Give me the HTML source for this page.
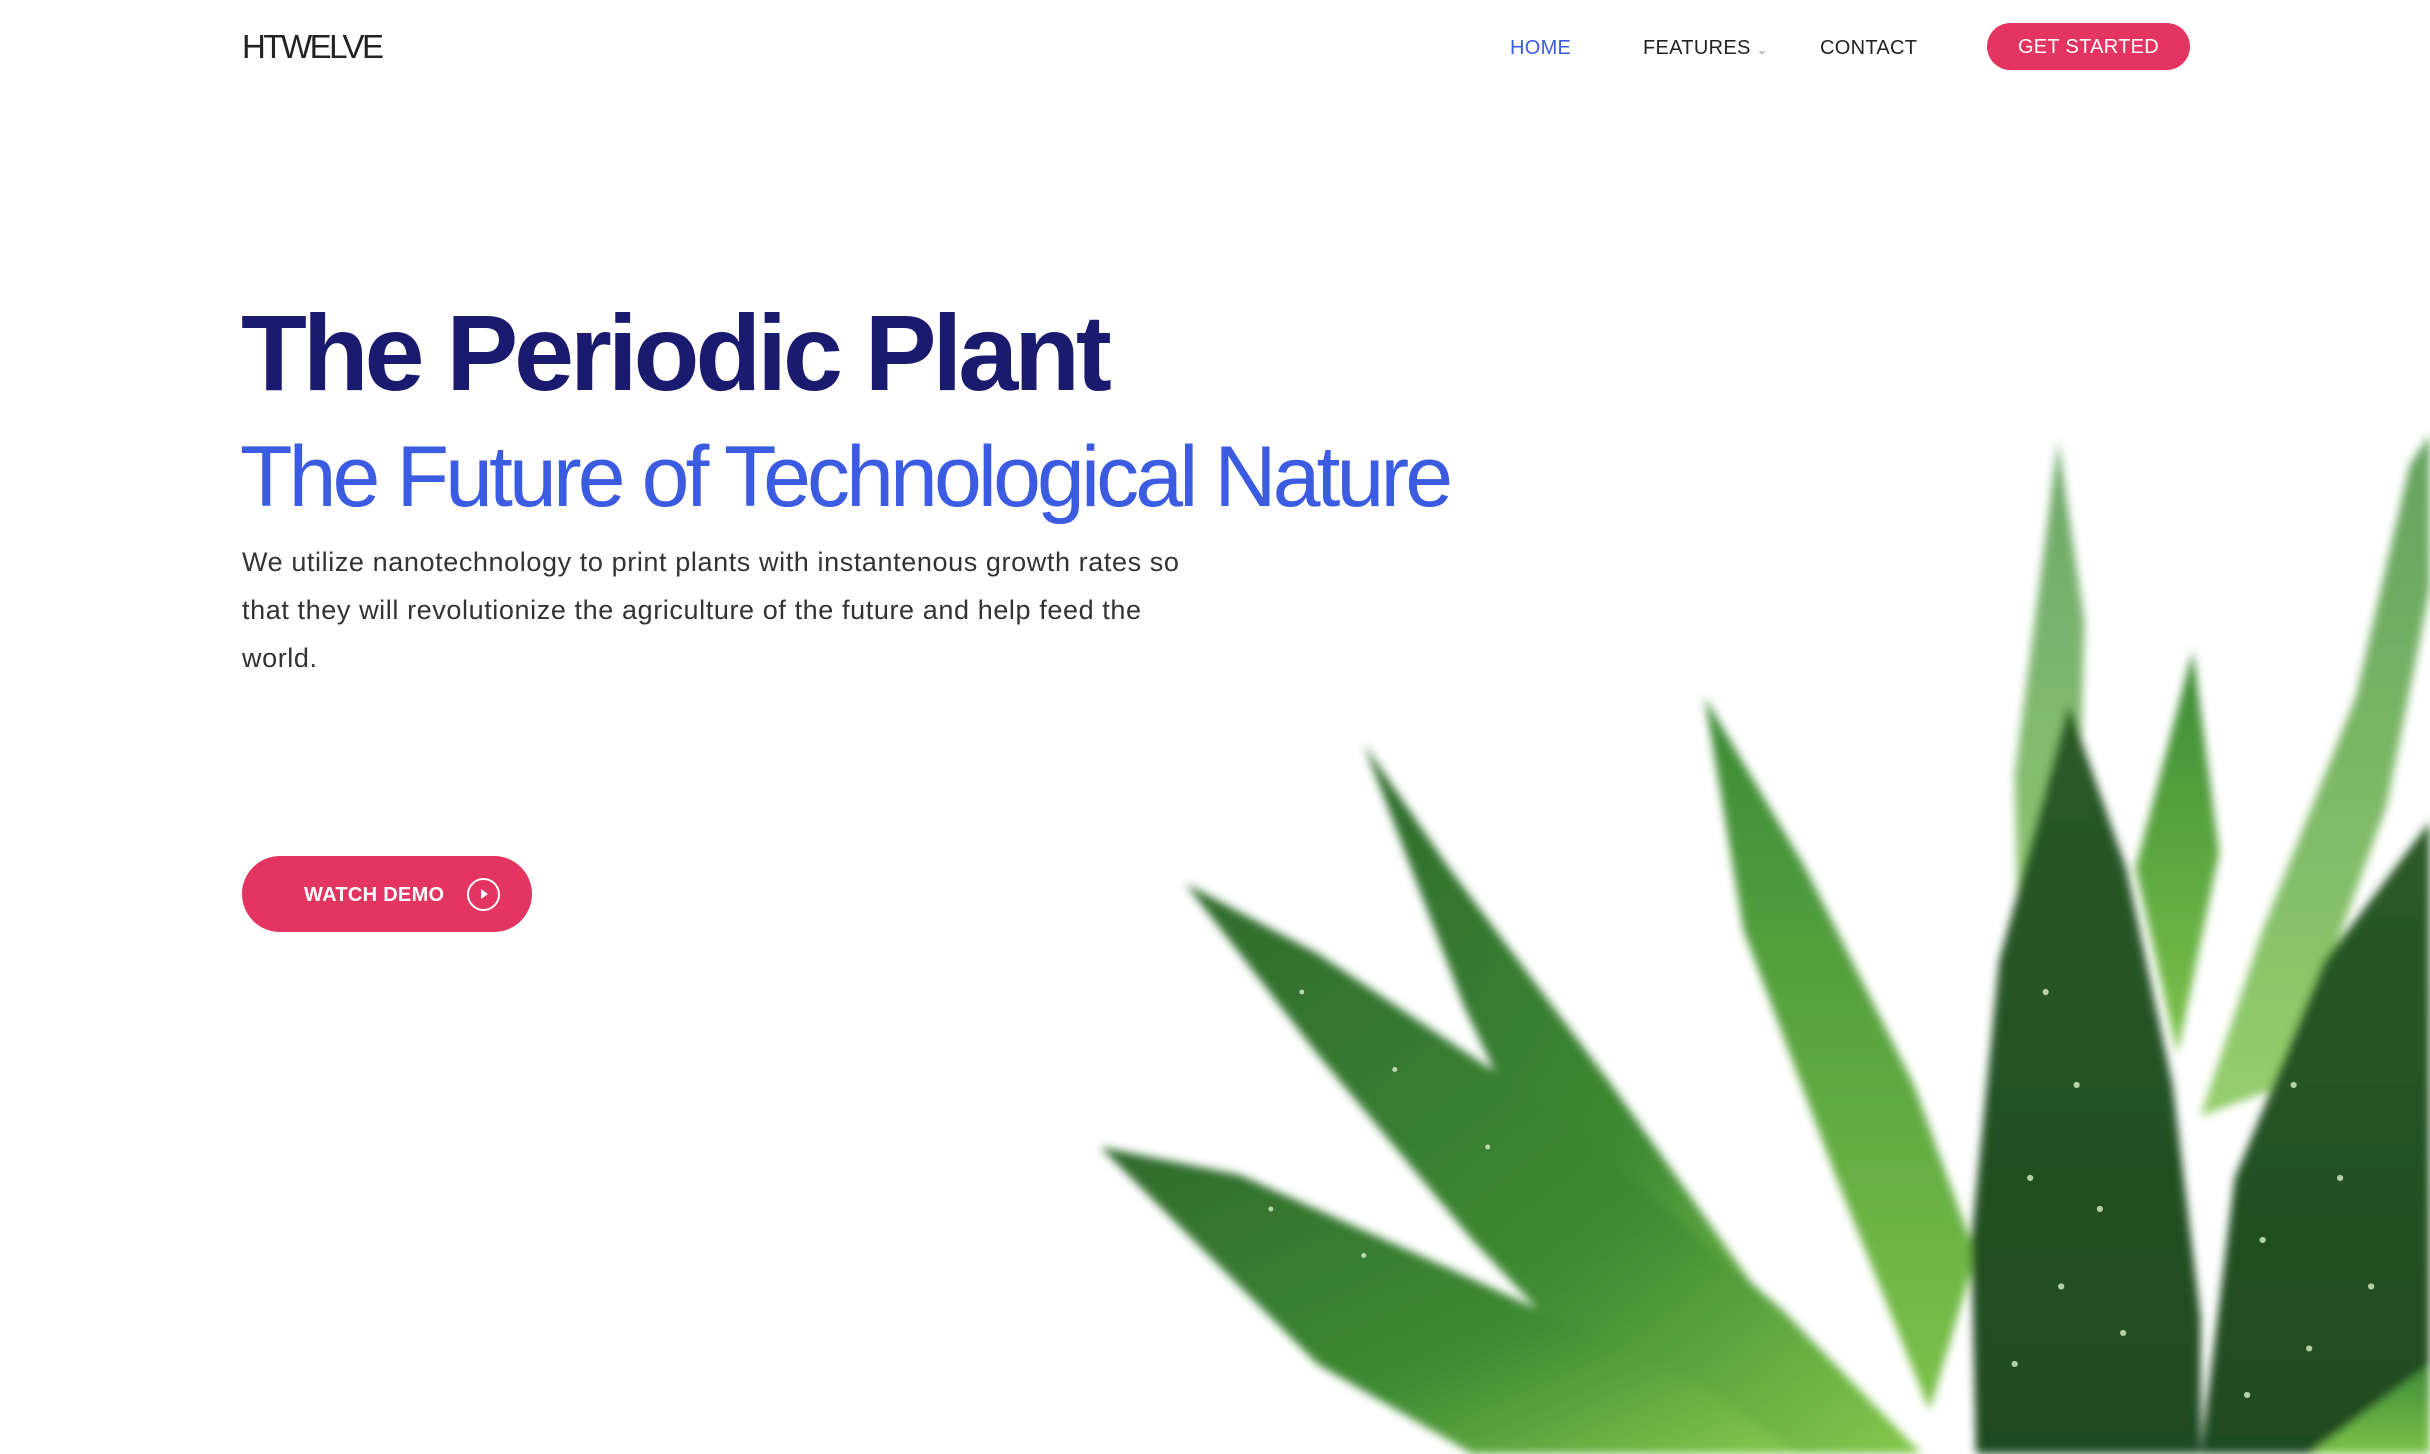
<!DOCTYPE html>
<html><head><meta charset="utf-8">
<style>
html,body{margin:0;padding:0;}
body{width:2430px;height:1454px;overflow:hidden;background:#fff;position:relative;font-family:"Liberation Sans",sans-serif;}
.logo{position:absolute;left:242px;top:28px;font-size:33px;color:#222;letter-spacing:-2.5px;font-weight:normal;}
.nav{position:absolute;top:37px;font-size:20px;color:#222;letter-spacing:0.3px;}
.btn1{position:absolute;left:1987px;top:23px;width:203px;height:47px;border-radius:24px;background:#e33462;color:#fff;font-size:20px;line-height:49px;text-align:center;letter-spacing:0.3px;}
h1{position:absolute;left:241px;top:290px;margin:0;font-size:108px;font-weight:bold;color:#1a1a6e;letter-spacing:-4.2px;white-space:nowrap;}
h2{position:absolute;left:240px;top:428px;margin:0;font-size:86px;font-weight:normal;color:#3b5be0;letter-spacing:-3.9px;white-space:nowrap;}
p{position:absolute;left:242px;top:538px;margin:0;font-size:27px;line-height:48px;color:#333;letter-spacing:0.6px;white-space:nowrap;}
.demo{position:absolute;left:242px;top:856px;width:290px;height:76px;border-radius:38px;background:#e33462;color:#fff;font-size:20px;font-weight:bold;}
.demo span{position:absolute;left:62px;top:28px;letter-spacing:0.3px;}
.demo i{position:absolute;left:225px;top:22px;width:33px;height:33px;border:2px solid #fff;border-radius:50%;box-sizing:border-box;}
.demo i:after{content:"";position:absolute;left:12px;top:9px;border-left:7px solid #fff;border-top:5.5px solid transparent;border-bottom:5.5px solid transparent;}
svg{position:absolute;left:0;top:0;}
</style></head><body>
<svg width="2430" height="1454" viewBox="0 0 1568 938">
<defs>
<linearGradient id="g1" x1="0" y1="0" x2="1" y2="1"><stop offset="0" stop-color="#2e6a2c"/><stop offset="0.6" stop-color="#3f8a34"/><stop offset="1" stop-color="#86c94e"/></linearGradient>
<linearGradient id="g2" x1="0" y1="0" x2="0" y2="1"><stop offset="0" stop-color="#3d8a37"/><stop offset="1" stop-color="#7cc24a"/></linearGradient>
<linearGradient id="g3" x1="0" y1="0" x2="0" y2="1"><stop offset="0" stop-color="#2a5a28"/><stop offset="1" stop-color="#1f4a22"/></linearGradient>
<filter id="b"><feGaussianBlur stdDeviation="3"/></filter>
</defs>
<g filter="url(#b)">
<polygon fill="url(#g2)" points="1328,285 1345,400 1340,600 1305,720 1300,500" opacity="0.75"/>
<polygon fill="url(#g2)" points="1555,300 1520,450 1460,600 1420,720 1475,700 1540,520 1568,380 1568,280" opacity="0.8"/>
<polygon fill="url(#g2)" points="1415,420 1432,550 1405,680 1378,560"/>
<polygon fill="url(#g1)" points="880,480 935,560 1040,700 1160,870 1120,938 1030,830 945,650"/>
<polygon fill="url(#g2)" points="1100,450 1165,560 1235,700 1275,810 1245,910 1185,760 1125,600"/>
<polygon fill="url(#g1)" points="765,570 850,615 1000,715 1150,845 1240,938 1080,938 950,800 850,680"/>
<polygon fill="url(#g1)" points="710,740 800,758 950,825 1100,895 1160,938 950,938 850,880"/>
<polygon fill="url(#g3)" points="1335,455 1372,560 1402,700 1420,850 1420,938 1275,938 1272,800 1290,620"/>
<polygon fill="url(#g3)" points="1568,530 1500,620 1442,760 1420,938 1568,938"/>
<polygon fill="url(#g2)" points="1568,880 1490,938 1568,938"/>
</g>
<g fill="#d8f0c8" opacity="0.8">
<circle cx="1320" cy="640" r="2"/><circle cx="1340" cy="700" r="2"/><circle cx="1310" cy="760" r="2"/><circle cx="1355" cy="780" r="2"/><circle cx="1330" cy="830" r="2"/><circle cx="1370" cy="860" r="2"/><circle cx="1300" cy="880" r="2"/>
<circle cx="1480" cy="700" r="2"/><circle cx="1510" cy="760" r="2"/><circle cx="1460" cy="800" r="2"/><circle cx="1530" cy="830" r="2"/><circle cx="1490" cy="870" r="2"/><circle cx="1450" cy="900" r="2"/>
<circle cx="840" cy="640" r="1.6"/><circle cx="900" cy="690" r="1.6"/><circle cx="960" cy="740" r="1.6"/><circle cx="820" cy="780" r="1.6"/><circle cx="880" cy="810" r="1.6"/>
</g>
</svg>
<div class="logo">HTWELVE</div>
<div class="nav" style="left:1510px;color:#3b5be0;">HOME</div>
<div class="nav" style="left:1643px;">FEATURES <span style="font-size:13px;color:#999;">&#8964;</span></div>
<div class="nav" style="left:1820px;">CONTACT</div>
<div class="btn1">GET STARTED</div>
<h1>The Periodic Plant</h1>
<h2>The Future of Technological Nature</h2>
<p>We utilize nanotechnology to print plants with instantenous growth rates so<br>that they will revolutionize the agriculture of the future and help feed the<br>world.</p>
<div class="demo"><span>WATCH DEMO</span><i></i></div>
</body></html>
